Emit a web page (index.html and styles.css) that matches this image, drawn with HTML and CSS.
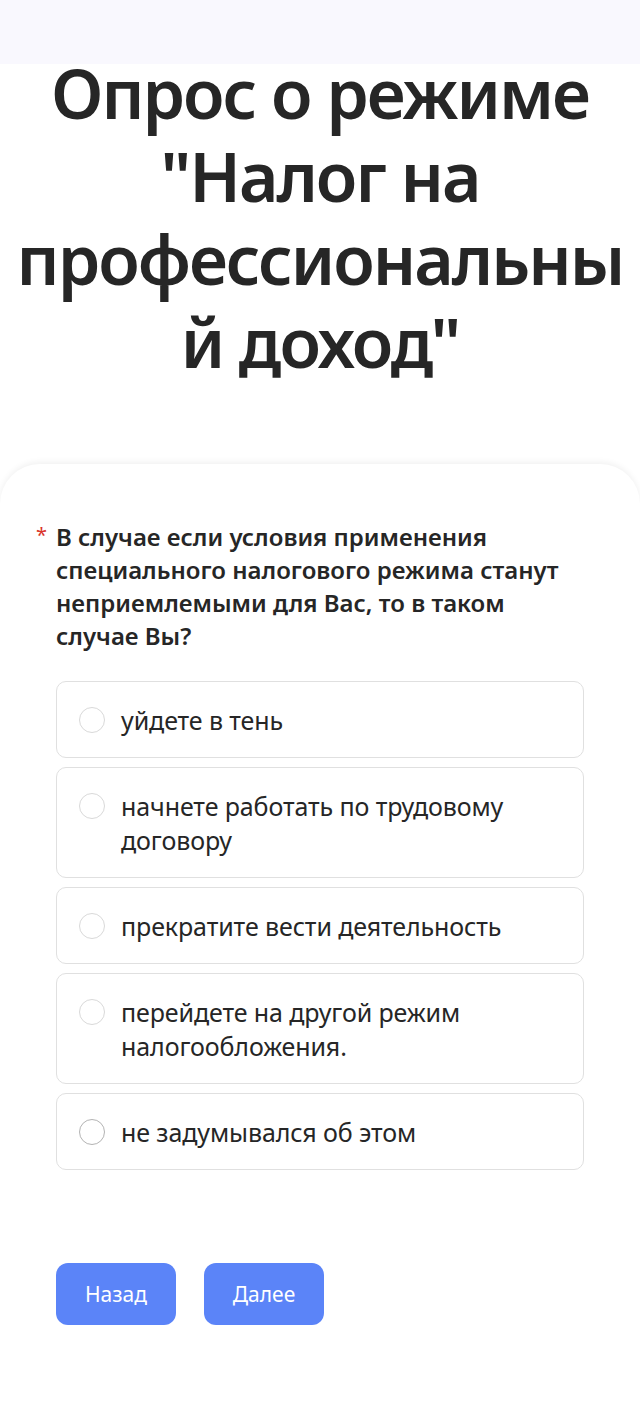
FILE: index.html
```html
<!DOCTYPE html>
<html lang="ru">
<head>
<meta charset="utf-8">
<link rel="stylesheet" href="styles.css">
</head>
<body>
<div class="topbar"></div>
<h1 class="title">Опрос о режиме "Налог на профессиональны й доход"</h1>
<main class="card">
  <div class="question">
    <span class="req">*</span>
    <span class="qtext">В случае если условия применения специального налогового режима станут неприемлемыми для Вас, то в таком случае Вы?</span>
  </div>
  <div class="options">
    <label class="option"><span class="radio"></span><span class="otext">уйдете в тень</span></label>
    <label class="option"><span class="radio"></span><span class="otext">начнете работать по трудовому договору</span></label>
    <label class="option"><span class="radio"></span><span class="otext">прекратите вести деятельность</span></label>
    <label class="option"><span class="radio"></span><span class="otext">перейдете на другой режим налогообложения.</span></label>
    <label class="option"><span class="radio dark"></span><span class="otext">не задумывался об этом</span></label>
  </div>
  <div class="buttons">
    <button class="btn">Назад</button>
    <button class="btn">Далее</button>
  </div>
</main>
</body>
</html>
```
FILE: styles.css
```css
* { box-sizing: border-box; }
html, body { margin: 0; padding: 0; background: #fff; }
body {
  font-family: "Noto Sans", "Open Sans", sans-serif;
  color: #262626;
  width: 640px;
  min-height: 1424px;
  overflow: hidden;
}
.topbar {
  height: 64px;
  background: #f9f8fe;
}
.title {
  margin: -13px 0 0 0;
  padding: 0;
  font-size: 68px;
  line-height: 83px;
  font-weight: 600;
  text-align: center;
  color: #262626;
  letter-spacing: -2px;
}
.card {
  margin-top: 81px;
  border-radius: 40px 40px 0 0;
  box-shadow: 0 -2px 6px rgba(0,0,0,0.06);
  padding: 56px 56px 100px 56px;
  min-height: 960px;
}
.question {
  position: relative;
  font-size: 24px;
  line-height: 33px;
  font-weight: 600;
  color: #262626;
  padding-right: 24px;
}
.req {
  position: absolute;
  left: -20px;
  top: -2px;
  color: #d9342b;
  font-size: 20px;
  font-weight: 400;
}
.options {
  margin-top: 29px;
  display: flex;
  flex-direction: column;
  gap: 9px;
}
.option {
  display: flex;
  align-items: flex-start;
  gap: 16px;
  border: 1px solid #e0e0e0;
  border-radius: 10px;
  padding: 21px 20px 20px 22px;
  min-height: 77px;
}
.radio {
  flex: none;
  width: 26px;
  height: 26px;
  border-radius: 50%;
  border: 1.5px solid #d9d9d9;
  margin-top: 4px;
}
.radio.dark { border-color: #b3b3b3; }
.otext {
  font-size: 25px;
  line-height: 34px;
  color: #262626;
  letter-spacing: -0.1px;
}
.buttons {
  margin-top: 93px;
  display: flex;
  gap: 28px;
}
.btn {
  border: none;
  background: #5b84f8;
  color: #fff;
  font-family: "Noto Sans", sans-serif;
  font-size: 21px;
  height: 62px;
  width: 120px;
  padding: 0;
  border-radius: 12px;
}
```
